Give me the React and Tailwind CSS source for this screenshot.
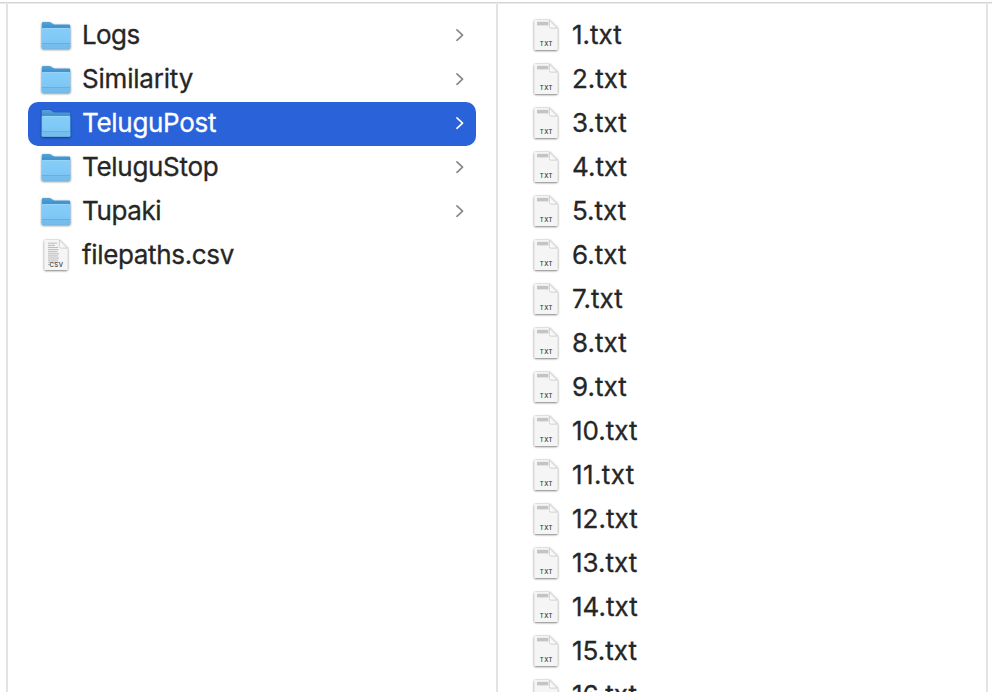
const folders = [
  { name: "Logs", track: "tracking-[-0.6px]" },
  { name: "Similarity", track: "tracking-[-0.2px]" },
  { name: "TeluguPost", track: "tracking-[-0.3px]", selected: true },
  { name: "TeluguStop", track: "tracking-[-0.3px]" },
  { name: "Tupaki", track: "tracking-[-0.4px]" },
];

const files = Array.from({ length: 16 }, (_, i) => `${i + 1}.txt`);

function FolderIcon() {
  return (
    <svg width="32" height="36" viewBox="0 0 32 36" className="shrink-0 overflow-visible">
      <defs>
        <linearGradient id="folderFront" x1="0" y1="0" x2="0" y2="1">
          <stop offset="0" stopColor="#86cdf9" />
          <stop offset="1" stopColor="#7ac4f3" />
        </linearGradient>
        <linearGradient id="folderBack" x1="0" y1="0" x2="0" y2="1">
          <stop offset="0" stopColor="#55a4da" />
          <stop offset="0.25" stopColor="#3b89c6" />
          <stop offset="1" stopColor="#3b89c6" />
        </linearGradient>
        <filter id="folderShadow" x="-20%" y="-20%" width="140%" height="150%">
          <feDropShadow dx="0" dy="0.8" stdDeviation="0.8" floodColor="#000" floodOpacity="0.5" />
        </filter>
      </defs>
      <g filter="url(#folderShadow)">
        <path d="M1.8 5.5Q1.8 4.1 3.2 4.1H9.4Q10.6 4.1 11.5 4.9L12.8 5.8Q13.5 6.4 14.6 6.4H29Q30.2 6.4 30.2 7.6V29.4Q30.2 30.4 29.2 30.4H2.8Q1.8 30.4 1.8 29.4Z" fill="url(#folderBack)" />
        <path d="M1.8 11.2Q1.8 10 3 10H29Q30.2 10 30.2 11.2V29.4Q30.2 30.4 29.2 30.4H2.8Q1.8 30.4 1.8 29.4Z" fill="url(#folderFront)" />
        <path d="M2.4 10.4H29.6" stroke="#a0dafb" strokeWidth="0.7" />
        <path d="M1.8 26H30.2V29.4Q30.2 30.4 29.2 30.4H2.8Q1.8 30.4 1.8 29.4Z" fill="#74bdec" />
        <path d="M1.8 25.5H30.2" stroke="#62aee1" strokeWidth="0.9" />
      </g>
    </svg>
  );
}

function DocumentIcon({ label, csv }) {
  return (
    <svg width="32" height="36" viewBox="0 0 32 36" className="shrink-0 overflow-visible">
      <defs>
        <linearGradient id="paper" x1="0" y1="0" x2="0.4" y2="1">
          <stop offset="0" stopColor="#f5f5f5" />
          <stop offset="1" stopColor="#f5f5f5" />
        </linearGradient>
        <linearGradient id="fold" x1="0" y1="1" x2="1" y2="0">
          <stop offset="0" stopColor="#ffffff" />
          <stop offset="0.5" stopColor="#f3f3f3" />
          <stop offset="1" stopColor="#cfcfcf" />
        </linearGradient>
        <filter id="paperShadow" x="-20%" y="-20%" width="140%" height="140%">
          <feDropShadow dx="0" dy="0.6" stdDeviation="0.8" floodColor="#000" floodOpacity="0.65" />
        </filter>
      </defs>
      <path d="M4.4 3.1Q4.4 1.9 5.6 1.9H19.4L27.6 10.1V30.7Q27.6 31.9 26.4 31.9H5.6Q4.4 31.9 4.4 30.7Z" fill="url(#paper)" filter="url(#paperShadow)" />
      <path d="M19.4 1.9V8.5Q19.4 10.1 21 10.1H27.6Z" fill="url(#fold)" stroke="#b8b8b8" strokeWidth="0.6" />
      {csv ? (
        <g fill="none" stroke="#bcbcbc" strokeWidth="1.1">
          <path d="M8 5.2H17" />
          <path d="M8 7.4H15" />
          <path d="M8 9.5H18" />
          <path d="M8 11.6H18.5" />
          <path d="M8 13.7H17.5" />
          <path d="M8 15.8H19" />
          <path d="M8 17.9H18" />
          <path d="M8 20H19" />
          <path d="M8 22.1H18" />
          <path d="M8 24.2H19" />
          <path d="M8 26.6H10.2" />
        </g>
      ) : (
        <path d="M7 5.6H18.3" stroke="#c4c4c4" strokeWidth="3.6" />
      )}
      <text x="16.4" y={csv ? 28.5 : 28.4} textAnchor="middle" fontSize="6" fontWeight="500" letterSpacing="0.5" fill="#333" className="font-['Inter']">
        {label}
      </text>
    </svg>
  );
}

function Row({ name, track = "", selected, folder, children }) {
  return (
    <li className={`flex h-11 shrink-0 items-center rounded-[10px] pl-3 ${selected ? "bg-[#2962d9] text-white" : "text-[#262626]"}`}>
      {children}
      <span className={`ml-2.5 flex-1 whitespace-nowrap pb-0.5 text-[26px] leading-[42px] [-webkit-text-stroke:0.3px_currentColor] ${track}`}>{name}</span>
      {folder && (
        <svg width="10" height="16" viewBox="0 0 10 16" className={`mr-[11px] ${selected ? "text-white" : "text-[#858585]"}`}>
          <path d="M1.9 1.9L7.6 7.1L1.9 12.3" fill="none" stroke="currentColor" strokeWidth="1.6" strokeLinecap="round" strokeLinejoin="round" />
        </svg>
      )}
    </li>
  );
}

export default function App() {
  return (
    <div className="flex h-[692px] w-[992px] flex-col overflow-hidden bg-white pt-[2px] font-['Inter',sans-serif]">
      <div className="h-px shrink-0 bg-[#d4d4d4]" />
      <div className="h-px shrink-0 bg-[#ebebeb]" />
      <main className="flex min-h-0 flex-1 pl-[6px]">
        <ul className="flex w-[492px] shrink-0 flex-col border-x-2 border-[#e3e3e3] pl-5 pr-5 pt-[10px]">
          {folders.map((f) => (
            <Row key={f.name} {...f} folder>
              <FolderIcon />
            </Row>
          ))}
          <Row name="filepaths.csv" track="tracking-[-0.34px]">
            <DocumentIcon label="CSV" csv />
          </Row>
        </ul>
        <ul className="flex w-[490px] shrink-0 flex-col overflow-hidden border-r-2 border-[#e3e3e3] pl-5 pt-[10px]">
          {files.map((name) => (
            <Row key={name} name={name} track={name === "11.txt" ? "tracking-[0.4px]" : ""}>
              <DocumentIcon label="TXT" />
            </Row>
          ))}
        </ul>
      </main>
    </div>
  );
}
